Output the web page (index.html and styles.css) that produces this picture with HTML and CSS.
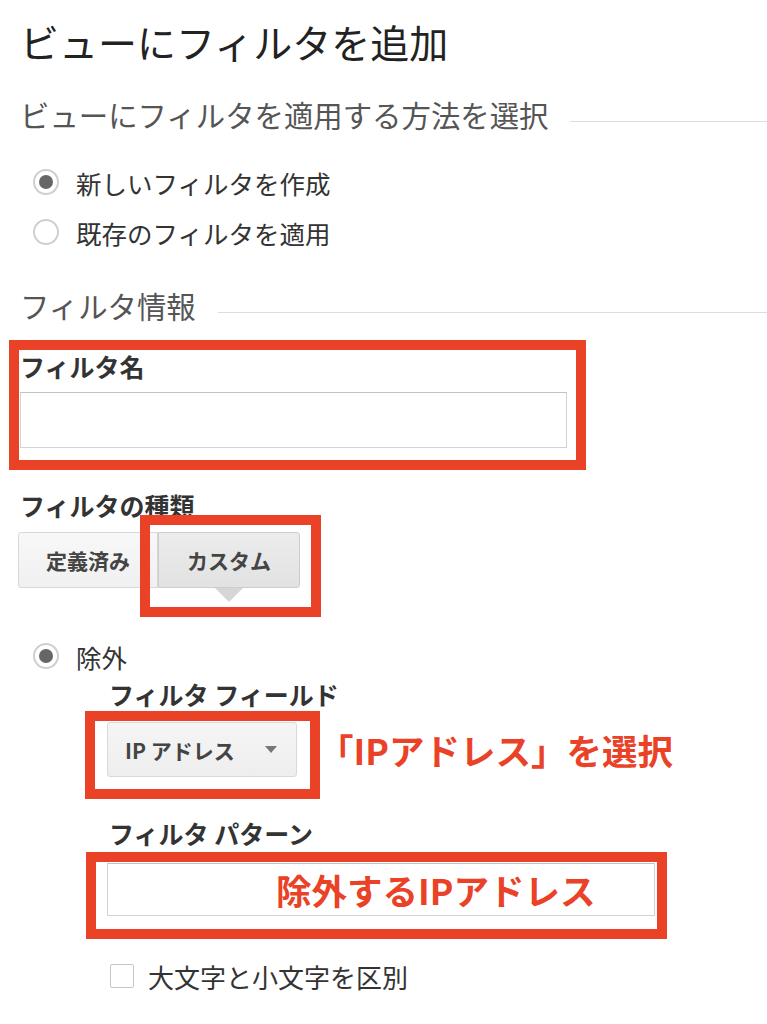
FILE: index.html
```html
<!DOCTYPE html>
<html lang="ja">
<head>
    <meta charset="UTF-8">
    <meta name="viewport" content="width=device-width, initial-scale=1.0">
    <title>ビューにフィルタを追加</title>
    <link rel="stylesheet" href="styles.css">
</head>
<body>
    <div class="page">
        <h1 class="title">ビューにフィルタを追加</h1>

        <div class="section-head">
            <span>ビューにフィルタを適用する方法を選択</span>
            <span class="rule"></span>
        </div>
        <div class="radio-list">
            <label class="radio-row"><span class="radio checked"></span>新しいフィルタを作成</label>
            <label class="radio-row"><span class="radio"></span>既存のフィルタを適用</label>
        </div>

        <div class="section-head section-info">
            <span>フィルタ情報</span>
            <span class="rule"></span>
        </div>

        <div class="mark mark-name">
            <div class="field-label">フィルタ名</div>
            <div class="text-input name-input"></div>
        </div>

        <div class="field-label type-label">フィルタの種類</div>
        <div class="toggle">
            <button class="toggle-btn">定義済み</button>
            <div class="mark mark-custom">
                <button class="toggle-btn active">カスタム</button>
            </div>
        </div>

        <label class="radio-row exclude-row"><span class="radio checked"></span>除外</label>

        <div class="sub-fields">
            <div class="field-label">フィルタ フィールド</div>
            <div class="select-row">
                <div class="mark mark-select">
                    <div class="select">IP アドレス<span class="caret"></span></div>
                </div>
                <span class="note">「IPアドレス」を選択</span>
            </div>

            <div class="field-label pattern-label">フィルタ パターン</div>
            <div class="mark mark-pattern">
                <div class="text-input pattern-input"><span class="note">除外するIPアドレス</span></div>
            </div>

            <label class="check-row"><span class="checkbox"></span>大文字と小文字を区別</label>
        </div>
    </div>
</body>
</html>
```

FILE: styles.css
```css
body {
    margin: 0;
    font-family: "Noto Sans CJK JP", "Liberation Sans", sans-serif;
    color: #333;
    background-color: #fff;
}
.page {
    padding: 14px 0 40px 20px;
}
.title {
    margin: 0;
    font-size: 39px;
    font-weight: 400;
    line-height: 54px;
    color: #222;
}
.section-head {
    display: flex;
    align-items: center;
    gap: 22px;
    margin-top: 26px;
    font-size: 29.4px;
    line-height: 40px;
    color: #555;
}
.section-head .rule {
    flex: 1;
    height: 1px;
    margin-top: 14px;
    background-color: #ddd;
}
.radio-list {
    margin-top: 23px;
}
.radio-row {
    display: flex;
    align-items: center;
    height: 50px;
    font-size: 25.5px;
    color: #333;
}
.radio {
    position: relative;
    box-sizing: border-box;
    width: 26px;
    height: 26px;
    margin: 0 17px 0 13px;
    border: 2px solid #cfcfcf;
    border-radius: 50%;
    background-color: #fff;
}
.radio.checked::after {
    content: "";
    position: absolute;
    top: 4px;
    left: 4px;
    width: 14px;
    height: 14px;
    border-radius: 50%;
    background-color: #666;
}
.section-info {
    margin-top: 28px;
}
.field-label {
    font-size: 25px;
    font-weight: 700;
    line-height: 32px;
    color: #333;
}
.mark {
    position: relative;
}
.mark::after {
    content: "";
    position: absolute;
    border: 10px solid #e94227;
    pointer-events: none;
}
.mark-name {
    width: 547px;
    margin-top: 25px;
}
.mark-name::after {
    top: -10px;
    left: -11px;
    right: -19px;
    bottom: -22px;
}
.text-input {
    box-sizing: border-box;
    border: 1px solid #d3d3d3;
    border-top-color: #c2c2c2;
    background-color: #fff;
}
.name-input {
    height: 56px;
    margin-top: 10px;
}
.type-label {
    margin-top: 41px;
}
.toggle {
    display: flex;
    margin: 11px 0 0 -2px;
}
.toggle-btn {
    position: relative;
    box-sizing: border-box;
    width: 140px;
    height: 56px;
    padding: 0;
    border: 1px solid #d8d8d8;
    border-radius: 3px 0 0 3px;
    background: linear-gradient(#f8f8f8, #f0f0f0);
    font-family: inherit;
    font-size: 21px;
    font-weight: 700;
    color: #444;
}
.toggle-btn.active {
    width: 142px;
    border-color: #cdcdcd;
    border-radius: 0 3px 3px 0;
    background: linear-gradient(#ececec, #e2e2e2);
}
.toggle-btn.active::before {
    content: "";
    position: absolute;
    top: 55px;
    left: 56px;
    border-style: solid;
    border-width: 14px 14px 0 14px;
    border-color: #d6d6d6 transparent transparent transparent;
}
.mark-custom::after {
    top: -17px;
    left: -18px;
    right: -21px;
    bottom: -29px;
}
.exclude-row {
    height: 44px;
    margin-top: 46px;
}
.sub-fields {
    margin-left: 87px;
}
.sub-fields > .field-label {
    margin-left: 2px;
}
.select-row {
    display: flex;
    align-items: center;
    gap: 21px;
    margin-top: 12px;
}
.select {
    display: flex;
    align-items: center;
    box-sizing: border-box;
    width: 190px;
    height: 55px;
    padding-left: 17px;
    border: 1px solid #dadada;
    border-radius: 3px;
    background: linear-gradient(#f5f5f5, #eeeeee);
    font-size: 21px;
    font-weight: 700;
    color: #444;
}
.caret {
    margin-left: auto;
    margin-right: 19px;
    border-style: solid;
    border-width: 7px 6px 0 6px;
    border-color: #777 transparent transparent transparent;
}
.mark-select::after {
    top: -11px;
    left: -22px;
    right: -23px;
    bottom: -22px;
}
.note {
    font-size: 35.5px;
    font-weight: 700;
    line-height: 40px;
    color: #e94227;
}
.pattern-label {
    margin-top: 40px;
}
.mark-pattern {
    width: 548px;
    margin-top: 14px;
}
.mark-pattern::after {
    top: -11px;
    left: -21px;
    right: -12px;
    bottom: -23px;
}
.pattern-input {
    display: flex;
    align-items: center;
    height: 53px;
    padding-left: 168px;
}
.check-row {
    display: flex;
    align-items: center;
    height: 44px;
    margin-top: 38px;
    font-size: 26px;
    color: #333;
}
.checkbox {
    box-sizing: border-box;
    width: 24px;
    height: 24px;
    margin: 0 14px 0 3px;
    border: 1.5px solid #c6c6c6;
    border-radius: 2px;
    background-color: #fff;
}
```
